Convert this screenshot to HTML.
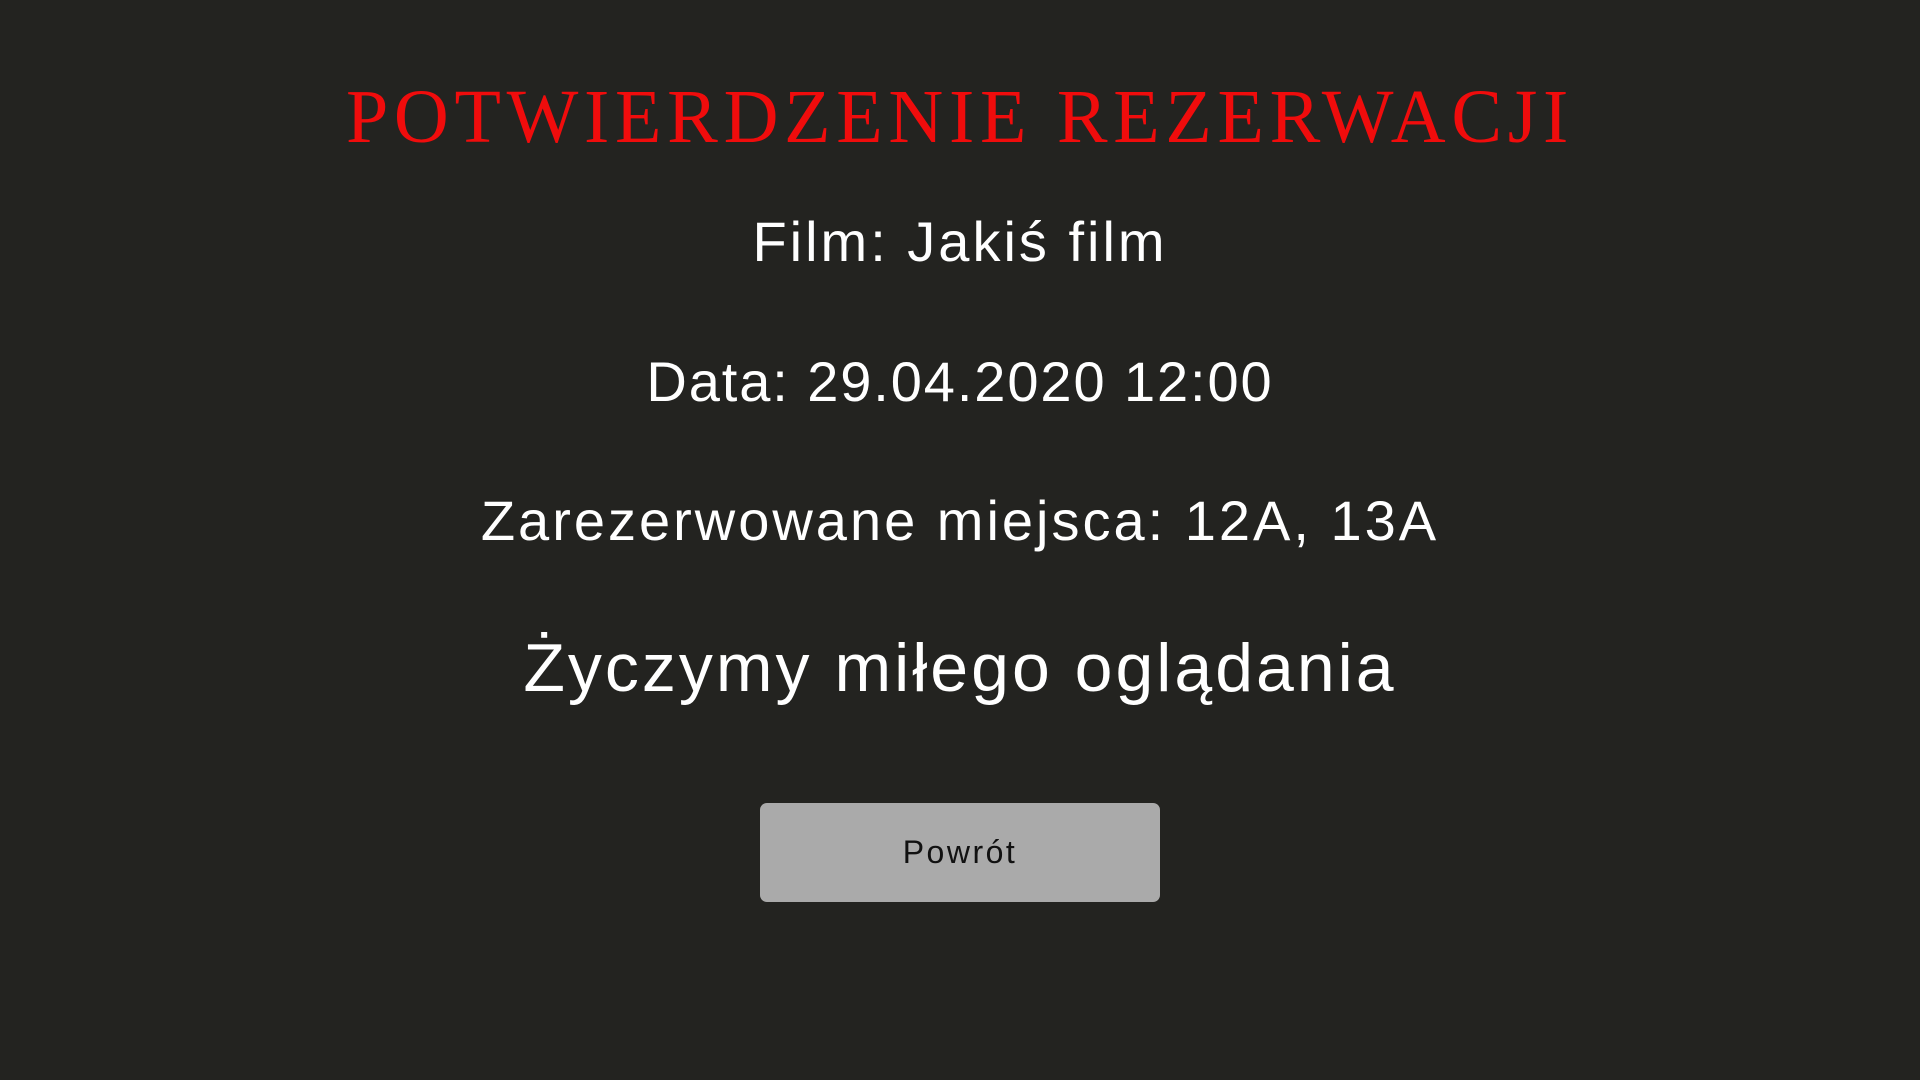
<!DOCTYPE html>
<html lang="pl">
<head>
<meta charset="utf-8">
<style>
  html,body{margin:0;padding:0;}
  body{width:1920px;height:1080px;background:#232320;position:relative;overflow:hidden;
       font-family:"Liberation Sans",sans-serif;color:#fff;}
  .l{position:absolute;left:0;width:1920px;text-align:center;line-height:1;white-space:nowrap;}
  .title{font-family:"Liberation Serif",serif;color:#f00c0c;font-size:76px;top:79px;letter-spacing:5.7px;}
  .t{font-size:56px;letter-spacing:3px;}
  .big{font-size:68px;letter-spacing:3px;}
  .btn{position:absolute;left:760px;top:803px;width:400px;height:99px;background:#aaaaaa;border-radius:7px;
       color:#111;font-size:32px;display:flex;align-items:center;justify-content:center;letter-spacing:2.5px;}
</style>
</head>
<body>
  <div class="l title">POTWIERDZENIE REZERWACJI</div>
  <div class="l t" style="top:214px">Film: Jakiś film</div>
  <div class="l t" style="top:354px;letter-spacing:1.9px">Data: 29.04.2020 12:00</div>
  <div class="l t" style="top:493px">Zarezerwowane miejsca: 12A, 13A</div>
  <div class="l big" style="top:634px">Życzymy miłego oglądania</div>
  <div class="btn">Powrót</div>
</body>
</html>
